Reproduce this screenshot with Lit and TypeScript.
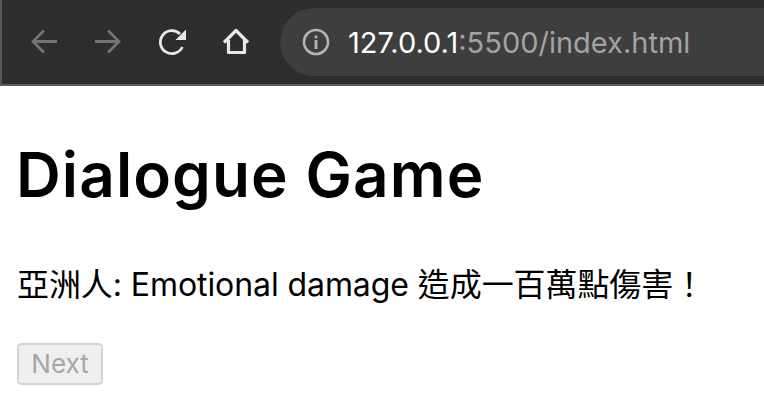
import { LitElement, html, css } from "lit";
import { customElement } from "lit/decorators.js";

@customElement("app-root")
export class AppRoot extends LitElement {
  static styles = css`
    :host { display: block; width: 764px; height: 400px; overflow: hidden; background: #fff; font-family: Inter, "Liberation Sans", "Noto Sans CJK TC", sans-serif; color: #000; }
    .bar { height: 84px; box-sizing: content-box; background: #2d2d2d; border-bottom: 2px solid #5c5c5c; border-left: 2px solid #555; display: flex; align-items: center; padding-left: 27px; }
    .ico { width: 30px; height: 30px; display: block; flex: none; }
    .nav { display: flex; gap: 34px; margin-right: 29px; }
    .omni { flex: 1; height: 68px; background: #3e3e3e; border-radius: 34px 0 0 34px; display: flex; align-items: center; padding-left: 22px; font-size: 29px; }
    .omni svg { width: 28px; height: 28px; margin-right: 18px; flex: none; }
    .host { color: #fff; }
    .rest { color: #a3a3a3; }
    .page { padding: 0 0 0 16px; }
    h1 { margin: 53px 0 0; font-size: 62px; line-height: 72px; font-weight: 600; letter-spacing: 1.1px; }
    p { margin: 54px 0 0 1px; font-size: 32px; line-height: 40px; white-space: nowrap; letter-spacing: -0.08px; }
    button { margin: 38px 0 0 1px; display: block; width: 86px; height: 42px; padding: 0 0 2px; box-sizing: border-box; background: #efefef; border: 2px solid #d4d4d4; border-radius: 5px; color: #a6a6a6; font: 400 26px Inter, "Liberation Sans", sans-serif; }
  `;
  render() {
    return html`
      <div class="bar">
        <div class="nav">
          <svg class="ico" viewBox="0 0 30 30" fill="none" stroke="#747474" stroke-width="2.800"><path d="M28 14.500H4M15 3.500 4 14.500 15 25.500"/></svg>
          <svg class="ico" viewBox="0 0 30 30" fill="none" stroke="#747474" stroke-width="2.800"><path d="M2 14.500H26M15 3.500 26 14.500 15 25.500"/></svg>
          <svg class="ico" viewBox="0 0 30 30" fill="none" stroke="#e8e8e8" stroke-width="2.800"><path d="M25.300 20A11.500 11.500 0 1 1 23 7"/><path d="M29 2.500V13H18.500Z" fill="#e8e8e8" stroke="none"/></svg>
          <svg class="ico" viewBox="0 0 30 30" fill="none" stroke="#e8e8e8" stroke-width="3.200" stroke-linejoin="round"><path d="M3 15.500 15 3.500 27 15.500M7.500 13V25.500H23.500V13"/></svg>
        </div>
        <div class="omni">
          <svg viewBox="0 0 28 28"><circle cx="14" cy="14" r="12" fill="none" stroke="#b4b4b4" stroke-width="2.600"/><rect x="12.600" y="12" width="2.800" height="9" fill="#b4b4b4"/><rect x="12.600" y="7.500" width="2.800" height="2.800" fill="#b4b4b4"/></svg>
          <span><span class="host">127.0.0.1</span><span class="rest">:5500/index.html</span></span>
        </div>
      </div>
      <div class="page">
        <h1>Dialogue Game</h1>
        <p>亞洲人: Emotional damage 造成一百萬點傷害！</p>
        <button disabled>Next</button>
      </div>
    `;
  }
}
